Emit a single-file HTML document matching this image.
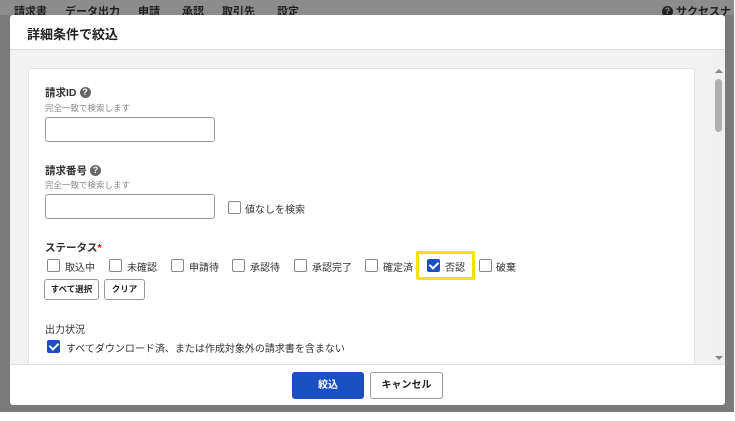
<!DOCTYPE html>
<html><head><meta charset="utf-8"><style>
*{box-sizing:border-box;margin:0;padding:0}
body{width:735px;height:421px;background:#fff;font-family:"Liberation Sans","Noto Sans CJK JP",sans-serif;position:relative;overflow:hidden;color:#333}
.ov{position:absolute;left:0;top:0;width:734px;height:412px;background:#7a7a7a}
.nav{position:absolute;top:0;left:0;width:734px;height:15px;background:#8c8c8c}
.nav span.n{position:absolute;top:3px;font-size:11px;font-weight:bold;color:#1e1e1e}
.modal{position:absolute;left:10px;top:15px;width:715px;height:390px;background:#fff;border-radius:3px}
.hd{position:absolute;left:0;top:0;width:715px;height:35px;border-bottom:1px solid #ddd}
.hd b{position:absolute;left:17px;top:9px;font-size:13px;color:#222}
.bd{position:absolute;left:0;top:35px;width:715px;height:315px;background:#f2f2f2;border-bottom:1px solid #ddd;overflow:hidden}
.card{position:absolute;left:18px;top:18px;width:667px;height:320px;background:#fff;border:1px solid #e2e2e2;border-radius:3px}
.sb{position:absolute;left:703px;top:0;width:12px;height:315px;background:#f0f0f0}
.t{position:absolute;font-size:10px;color:#333;white-space:nowrap}
.lb{font-weight:bold;font-size:10.5px;color:#333}
.hint{font-size:8.5px;color:#888}
.inp{position:absolute;width:170px;height:25px;border:1px solid #999;border-radius:3px;background:#fff}
.cb{position:absolute;width:13px;height:13px;border:1.5px solid #888;border-radius:2px;background:#fff}
.cb.on{background:#1a4fbf;border-color:#1a4fbf}
.cb.on:after{content:"";position:absolute;left:3px;top:0px;width:4px;height:7px;border:solid #fff;border-width:0 2px 2px 0;transform:rotate(45deg)}
.q{display:inline-block;width:11px;height:11px;border-radius:50%;background:#666;color:#fff;font-size:9px;text-align:center;line-height:11px;vertical-align:1px;margin-left:3px}
.btn{position:absolute;border:1px solid #999;border-radius:3px;background:#fff;font-size:8.5px;font-weight:bold;text-align:center;color:#222}
</style></head><body>
<div class="ov"></div>
<div class="nav">
<span class="n" style="left:14px">請求書</span><span class="n" style="left:65px">データ出力</span><span class="n" style="left:138px">申請</span><span class="n" style="left:182px">承認</span><span class="n" style="left:222px">取引先</span><span class="n" style="left:277px">設定</span>
<span class="n" style="left:662px"><span class="q" style="background:#222;color:#8c8c8c;margin:0 3px 0 0">?</span>サクセスナビ</span>
</div>
<div class="modal">
<div class="hd"><b>詳細条件で絞込</b></div>
<div class="bd">
<div class="card"></div>
<div class="sb"><div style="position:absolute;left:2px;top:29px;width:7px;height:53px;background:#b0b0b0;border-radius:4px"></div>
<div style="position:absolute;left:2px;top:19px;border:4px solid transparent;border-bottom-color:#888;border-top:0"></div>
<div style="position:absolute;left:2px;top:306px;border:4px solid transparent;border-top-color:#888;border-bottom:0"></div></div>
</div>
<div class="btn" style="left:282px;top:357px;width:72px;height:27px;background:#1a4fbf;border-color:#1a4fbf;color:#fff;line-height:25px;font-size:10px">絞込</div>
<div class="btn" style="left:360px;top:357px;width:73px;height:27px;line-height:25px;font-size:10px">キャンセル</div>
</div>
<div class="t lb" style="left:45px;top:85px">請求ID<span class="q">?</span></div>
<div class="t hint" style="left:45px;top:102px">完全一致で検索します</div>
<div class="inp" style="left:45px;top:117px"></div>
<div class="t lb" style="left:45px;top:163px">請求番号<span class="q">?</span></div>
<div class="t hint" style="left:45px;top:179px">完全一致で検索します</div>
<div class="inp" style="left:45px;top:194px"></div>
<div class="cb" style="left:228px;top:201px"></div><div class="t" style="left:245px;top:201px">値なしを検索</div>
<div class="t lb" style="left:45px;top:240px">ステータス<span style="color:#d00">*</span></div>
<div style="position:absolute;left:416px;top:251px;width:59px;height:29px;border:3px solid #f5e000;border-radius:2px"></div>
<div class="cb" style="left:47px;top:259px"></div><div class="t" style="left:65px;top:259px">取込中</div>
<div class="cb" style="left:109px;top:259px"></div><div class="t" style="left:127px;top:259px">未確認</div>
<div class="cb" style="left:171px;top:259px"></div><div class="t" style="left:189px;top:259px">申請待</div>
<div class="cb" style="left:232px;top:259px"></div><div class="t" style="left:250px;top:259px">承認待</div>
<div class="cb" style="left:294px;top:259px"></div><div class="t" style="left:312px;top:259px">承認完了</div>
<div class="cb" style="left:365px;top:259px"></div><div class="t" style="left:383px;top:259px">確定済</div>
<div class="cb on" style="left:427px;top:259px"></div><div class="t" style="left:445px;top:259px">否認</div>
<div class="cb" style="left:479px;top:259px"></div><div class="t" style="left:496px;top:259px">破棄</div>
<div class="btn" style="left:44px;top:279px;width:55px;height:21px;line-height:19px">すべて選択</div>
<div class="btn" style="left:104px;top:279px;width:41px;height:21px;line-height:19px">クリア</div>
<div class="t" style="left:45px;top:321px;font-size:10px">出力状況</div>
<div class="cb on" style="left:47px;top:340px"></div><div class="t" style="left:66px;top:340px">すべてダウンロード済、または作成対象外の請求書を含まない</div>
</body></html>
